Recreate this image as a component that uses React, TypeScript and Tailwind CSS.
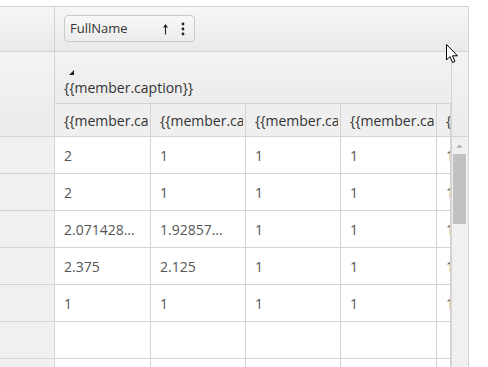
import React from "react";

const rows: string[][] = [
  ["2", "1", "1", "1", "1"],
  ["2", "1", "1", "1", "1"],
  ["2.071428…", "1.92857…", "1", "1", "1"],
  ["2.375", "2.125", "1", "1", "1"],
  ["1", "1", "1", "1", "1"],
  ["", "", "", "", ""],
  ["", "", "", "", ""],
];

const widths = ["w-[96px]", "w-[95px]", "w-[95px]", "w-[96px]", "w-[14px]"];

export default function App() {
  return (
    <div className="relative h-[367px] w-[488px] overflow-hidden bg-white font-['Open_Sans',sans-serif] text-[14px] text-[#444]">
      <div className="w-[469px] pt-[6px]">
        {/* top header row */}
        <div className="flex h-[46px] border-y border-r border-[#d3d3d3] bg-gradient-to-b from-[#f6f6f6] to-[#e9e9e9]">
          <div className="w-[55px] shrink-0 border-r border-[#d3d3d3]" />
          <div className="flex-1 pl-[9px] pt-[8px]">
            <div className="flex h-[27px] w-[131px] items-center rounded-[4px] border border-[#c9c9c9] bg-gradient-to-b from-[#f8f8f8] to-[#ececec] pl-[5px] text-[13px] text-[#333]">
              <span className="flex-1">FullName</span>
              <svg width="7" height="12" viewBox="0 0 7 12" className="mr-[12px]">
                <path d="M3.5 2 V11.5" stroke="#222" strokeWidth="1.1" />
                <path d="M1 4.6 L3.5 1 L6 4.6 Z" fill="#222" />
              </svg>
              <svg width="4" height="14" viewBox="0 0 4 14" className="mr-[9px]">
                <circle cx="2" cy="2" r="1.4" fill="#222" />
                <circle cx="2" cy="7" r="1.4" fill="#222" />
                <circle cx="2" cy="12" r="1.4" fill="#222" />
              </svg>
            </div>
          </div>
        </div>

        {/* body */}
        <div className="flex">
          {/* left column */}
          <div className="w-[55px] shrink-0 border-r border-[#d3d3d3]">
            <div className="h-[85px] border-b border-[#d3d3d3] bg-gradient-to-b from-[#f3f3f3] to-[#ebebeb]" />
            {rows.map((_, i) => (
              <div key={i} className="h-[37px] border-b border-[#d3d3d3] bg-[#f0f0f0]" />
            ))}
          </div>

          {/* main */}
          <div className="w-[396px] shrink-0 overflow-hidden">
            <div className="flex h-[52px] flex-col justify-end border-b border-[#d3d3d3] bg-gradient-to-b from-[#f3f3f3] to-[#ebebeb] pb-[7px] pl-[9px] text-[#333]">
              <svg width="5" height="5" viewBox="0 0 5 5" className="mb-[4px] ml-[5px]">
                <path d="M5 0 L5 5 L0 5 Z" fill="#222" />
              </svg>
              <span className="leading-[17px]">{"{{member.caption}}"}</span>
            </div>
            <div className="flex h-[33px] border-b border-[#d3d3d3] bg-[#efefef] text-[#333]">
              {widths.map((w, i) => (
                <div
                  key={i}
                  className={`${w} flex shrink-0 items-center border-r border-[#d3d3d3] pl-[9px] ${i < 4 ? "pr-[2px]" : ""}`}
                >
                  <span className="block min-w-0 overflow-hidden whitespace-nowrap">
                    {i < 4 ? "{{member.caption}}" : "{"}
                  </span>
                </div>
              ))}
            </div>
            {rows.map((r, ri) => (
              <div key={ri} className="flex h-[37px] border-b border-[#d3d3d3] text-[#555]">
                {r.map((v, ci) => (
                  <div
                    key={ci}
                    className={`${widths[ci]} flex shrink-0 items-center overflow-hidden whitespace-nowrap border-r border-[#d3d3d3] pl-[9px]`}
                  >
                    {v}
                  </div>
                ))}
              </div>
            ))}
          </div>

          {/* scrollbar column */}
          <div className="w-[18px] shrink-0 border-x border-[#d3d3d3]">
            <div className="h-[85px] border-b border-[#d3d3d3] bg-gradient-to-b from-[#f3f3f3] to-[#ebebeb]" />
            <div className="h-[260px] bg-[#f0f0f0] pl-[1px] pt-[7px]">
              <svg width="13" height="4" viewBox="0 0 13 4" className="block">
                <path d="M3.5 3.5 L6.5 0.5 L9.5 3.5 Z" fill="#a6a6a6" />
              </svg>
              <div className="mt-[6px] h-[70px] w-[13px] bg-[#c1c1c1]" />
            </div>
          </div>
        </div>
      </div>

      {/* mouse cursor */}
      <svg
        width="14"
        height="21"
        viewBox="0 0 14 21"
        className="absolute left-[446px] top-[44px]"
      >
        <path
          d="M0.5 0.5 L0.5 16 L4 12.5 L6.5 18.5 L9 17.5 L6.5 11.8 L11.5 11.8 Z"
          fill="#fff"
          stroke="#000"
          strokeWidth="1"
          strokeLinejoin="round"
        />
      </svg>
    </div>
  );
}
